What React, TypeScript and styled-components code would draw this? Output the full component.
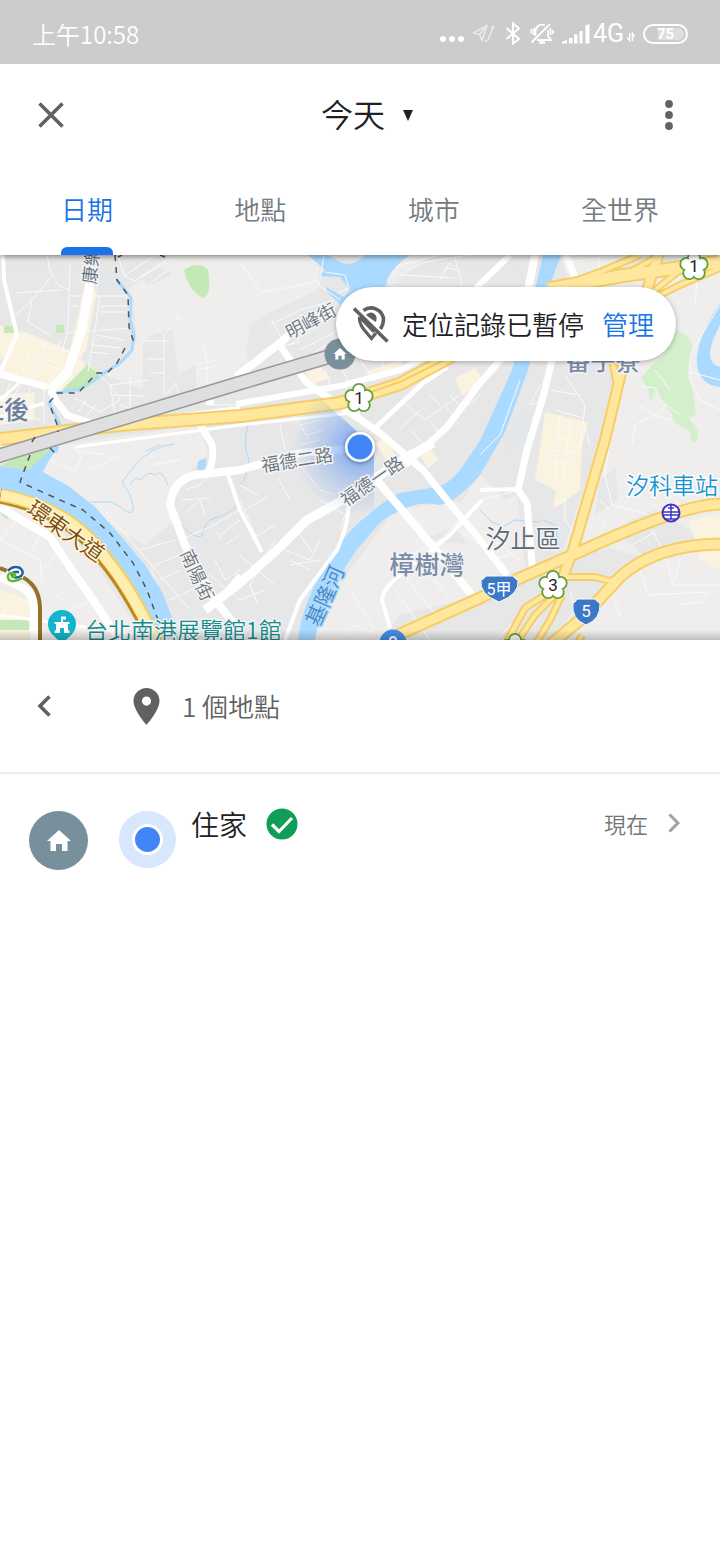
import React from 'react';
import styled, { createGlobalStyle } from 'styled-components';

const GlobalStyle = createGlobalStyle`
  *, *::before, *::after { box-sizing: border-box; }
  body {
    margin: 0;
    background: #fff;
    font-family: 'Noto Sans CJK TC', 'Noto Sans', sans-serif;
    font-weight: 350;
  }
  button {
    font: inherit;
    color: inherit;
    background: none;
    border: 0;
    padding: 0;
    cursor: pointer;
  }
`;

const Page = styled.div`
  min-height: 100vh;
  background: #fff;
`;

const StatusBar = styled.div`
  position: relative;
  z-index: 3;
  display: flex;
  align-items: center;
  justify-content: space-between;
  height: 64px;
  padding: 4px 32px 0;
  background: #ccc;
  color: #fff;
  font-size: 24px;
  line-height: 32px;
`;

const StatusIcons = styled.div`
  display: flex;
  align-items: center;
  gap: 8px;
  svg { display: block; }
`;

const Network = styled.span`
  display: flex;
  align-items: center;
  gap: 3px;
  font-family: Roboto, sans-serif;
  font-size: 25px;
  font-weight: 400;
`;

const Battery = styled.span`
  display: flex;
  align-items: center;
  justify-content: center;
  width: 45px;
  height: 20px;
  border: 2px solid #fff;
  border-radius: 10px;
  background: linear-gradient(90deg, transparent 11px, #dedede 11px) content-box;
  padding: 2px;
  font: 700 15px/16px Roboto, sans-serif;
`;

const Header = styled.header`
  position: relative;
  z-index: 2;
  background: #fff;
  box-shadow: 0 1px 6px rgba(0, 0, 0, 0.55);
`;

const AppBar = styled.div`
  display: flex;
  align-items: center;
  height: 102px;
`;

const BarButton = styled.button`
  display: grid;
  place-items: center;
  width: 102px;
  height: 96px;
`;

const TitleButton = styled.button`
  display: flex;
  align-items: center;
  justify-content: center;
  gap: 18px;
  flex: 1;
  padding: 0 0 4px 14px;
  color: #202124;
  font-size: 32px;
  line-height: 48px;
  svg { margin-top: 4px; }
`;

const Tabs = styled.nav`
  display: flex;
  justify-content: space-between;
  height: 89px;
  padding: 0 61px;
`;

const Tab = styled.button<{ $active?: boolean }>`
  display: flex;
  flex-direction: column;
  justify-content: space-between;
  padding-top: 23px;
  font-size: 26px;
  line-height: 40px;
  color: ${p => (p.$active ? '#1a73e8' : '#757a80')};
  &::after {
    content: '';
    width: 100%;
    height: 8px;
    border-radius: 6px 6px 0 0;
    background: ${p => (p.$active ? '#1a73e8' : 'transparent')};
  }
`;

const MapArea = styled.section`
  position: relative;
  height: 385px;
  overflow: hidden;
  &::after {
    content: '';
    position: absolute;
    inset: auto 0 0;
    height: 10px;
    background: linear-gradient(transparent, rgba(0, 0, 0, 0.2));
  }
`;

const MapSvg = styled.svg`
  display: block;
  width: 100%;
  height: 100%;
`;

const Notice = styled.div`
  position: absolute;
  z-index: 1;
  top: 32px;
  right: 44px;
  display: flex;
  align-items: center;
  height: 74px;
  padding: 0 22px 0 16px;
  border-radius: 37px;
  background: #fff;
  box-shadow: 0 1px 5px rgba(0, 0, 0, 0.3);
  color: #202124;
  font-size: 26px;
  line-height: 40px;
  svg { margin-right: 12px; }
`;

const Manage = styled.button`
  margin-left: 18px;
  color: #1a73e8;
`;

const Summary = styled.div`
  display: flex;
  align-items: center;
  height: 134px;
  border-bottom: 2px solid #eee;
  color: #616161;
  font-size: 26px;
  line-height: 40px;
`;

const BackButton = styled.button`
  display: grid;
  place-items: center;
  width: 88px;
  height: 88px;
`;

const PinIcon = styled.svg`
  margin: 0 22px 0 45px;
`;

const PlaceRow = styled.button`
  display: flex;
  align-items: flex-start;
  width: 100%;
  padding: 28px 40px 24px 29px;
  text-align: left;
`;

const HomeBadge = styled.span`
  display: grid;
  place-items: center;
  width: 59px;
  height: 59px;
  margin: 9px 31px 0 0;
  border-radius: 50%;
  background: #78909c;
`;

const NowDot = styled.span`
  display: grid;
  place-items: center;
  width: 57px;
  height: 57px;
  margin: 9px 15px 0 0;
  border-radius: 50%;
  background: #d8e7fd;
  &::before {
    content: '';
    width: 31px;
    height: 31px;
    border: 3px solid #fff;
    border-radius: 50%;
    background: #4285f4;
  }
`;

const PlaceName = styled.span`
  display: flex;
  align-items: center;
  gap: 19px;
  flex: 1;
  color: #202124;
  font-size: 28px;
  line-height: 44px;
`;

const PlaceTime = styled.span`
  display: flex;
  align-items: center;
  gap: 20px;
  color: #757575;
  font-size: 22px;
  line-height: 42px;
`;

const HOUSE = 'M0 -11 L-12 0 H-8.500 V10 H-3 V3 H3 V10 H8.500 V0 H12 Z';

const ruralAreas = [
  'M172 255H320L318 290 275 310 250 325 246 350 250 372 238 385 196 388 196 365 178 375 172 330 150 335 143 345 143 390 105 375 130 357 137 340 133 300 128 290Z',
  'M20 470 60 445 200 425 208 455 180 480 168 500 180 515 145 545 60 500Z',
  'M0 500 40 515 90 555 145 640 0 640Z',
  'M320 610 395 510 470 500 475 520 420 540 480 545 500 590 400 615 380 640 305 640Z',
  'M150 560 175 640 155 640Z',
  'M545 300 720 255V640H555L600 600 650 560 610 548 560 560 600 440 625 365 560 345Z',
  'M390 270 408 255 430 255 392 285Z',
  'M560 255H640L570 285Z',
  'M480 475 505 500 517 495 525 570 490 575 450 520Z',
];

const builtUpAreas = [
  'M600 480 616 468 618 500 595 515ZM630 520 655 510 690 530 700 545 650 560 625 540Z',
  'M120 265 150 258 172 275 150 285Z',
];

const blocks = [
  'M15 345 20 330 45 340 80 355 88 372 60 395 0 370Z',
  'M0 325 20 335 10 355 0 360Z',
  'M85 285 97 290 86 350 66 378 72 340Z',
  'M0 395 35 392 34 420 0 425Z',
  'M305 370 320 366 330 378 310 385Z',
  'M365 372 400 360 405 368 375 380Z',
  'M545 412 588 422 582 445 580 490 560 505 553 508 556 490 535 480 540 450Z',
  'M455 378 475 368 485 382 462 396Z',
  'M690 520 720 515V570L700 560Z',
  'M0 590 30 600 30 640 0 640Z',
  'M376 444 384 438 398 458 388 462Z',
  'M420 455 430 448 438 460 428 468Z',
];

const parks = [
  'M184 270Q198 260 208 270Q212 295 203 298Q188 290 184 270Z',
  'M62 390 88 364 104 376 80 392Z',
  'M56 325H64V333H56Z',
  'M4 326H15V333H4Z',
  'M0 466 30 450 55 446 50 458 28 470Z',
  'M0 507 9 519 6 519 0 512Z',
  'M0 620H29V630H0Z',
];

const rightPark =
  'M676 330Q692 335 692 350L690 360Q684 374 693 390L696 415 688 418Q702 432 697 440 690 446 690 432L674 422 672 414 662 400 655 392 650 402 648 388 641 378 655 362 664 355Z';

const minorRoads = [
  // west side
  'M47 255 50 270 58 285 70 290M50 278 32 300 28 322 50 335M16 293 62 290M14 316 32 300M70 262 68 330 60 360',
  'M20 335 45 345 70 352M30 350 20 380M45 345 30 382M66 333 130 328M70 296H128M72 306 78 306M100 296 96 322 88 372M100 306H128M100 312H128M96 335 125 340M92 345 120 348M90 352 110 354',
  'M30 360 68 372M28 367 62 380M0 350 25 335M36 345 56 350 62 340M42 358 60 364M0 400 44 406M0 410 40 420M10 382 4 400M20 386 10 402M30 388 26 405M44 390V425',
  'M88 364 110 385 116 420M75 398 100 412 120 400 110 385 150 380M130 376V415M80 425 95 405M86 400 78 412M112 395 145 396M120 405 150 415M155 325 164 335 164 395M143 341H170M146 359H164M150 373H164M164 335 180 318 174 315',
  'M118 255 124 276 155 255M124 276 135 281 168 258M140 278 166 262M150 283 168 270M204 345 208 372M198 364 216 360M197 370 216 366M206 372 210 392M166 395 175 383 182 400M215 390 210 405 235 405',
  // north centre
  'M240 262 262 292 302 285 318 280M324 255 319 285 340 300M325 272 345 275 349 288 338 293',
  'M395 290 388 280 400 265 440 255M400 275 455 278M410 270 425 262 470 255M440 280 450 262M445 268 460 270M455 258 462 285',
  'M270 325 300 310 335 300M272 320 285 345M290 345 325 320M300 350 335 332M310 356 325 345M300 370 370 352M340 365 350 385M360 360 375 382M325 370 332 390M380 358 388 375M265 350 300 342',
  'M400 400 425 420 480 380M430 395 440 405M440 430 480 395M445 405 460 425M420 410 400 430M450 395 465 412M410 430 430 450M430 420 440 435',
  'M290 410 310 440M300 425 320 420M280 425 285 450M305 435 325 430M300 445 320 440',
  // centre south
  'M278 478 290 500M300 465 320 490 335 495M240 485 258 495M245 510 270 495M240 500 262 550M250 540 275 525M275 540 250 585 258 605M285 550 310 560 320 540M300 535 312 552M290 565 320 560M240 555 275 585M320 500 345 515 340 530M240 600 265 590M310 570 290 560',
  'M185 490 200 485 208 475M182 500 210 498M186 512 200 500 205 515M180 540 215 525M213 525 240 510M220 535 240 520M225 545 240 535M215 530 222 540M140 550 175 540M155 565 195 548M160 580 180 570M170 600 195 588 210 575 240 600M215 560 225 580 240 570',
  'M100 505 130 540 190 610M50 460 75 472 82 455 70 445M75 450 105 455M150 465 180 460M90 470 120 455',
  'M0 540 40 560 42 580M25 510 0 540M42 530 30 555M55 555 35 580M40 580 62 600M70 610 95 598M10 600 0 620',
  'M382 580 400 560 440 540 480 500 520 490M400 570 440 620M425 570 450 600M395 590 430 640M350 590 375 630M340 640 355 625 380 635M420 560 445 590M430 515 415 530 425 545M480 545 460 530',
  'M480 455 500 435 520 380M540 385 530 405 545 400M550 390 580 395M565 375 585 405 580 450M555 410 583 418M550 425 580 430M552 437 575 440M548 450 582 452M545 462 575 464M545 475 570 475M560 415 554 490M570 420 562 490M583 420 590 445',
  'M640 406 655 415 670 420M660 412 665 405M655 415 635 425 632 445M645 442 650 440M555 502 565 500M565 500 565 520 575 535M610 440 605 475 612 505 640 512 655 518M600 500 610 510M652 530 665 555 675 550M665 555 673 585H720M632 545 655 532M605 520 597 540M600 580 610 590 620 615 628 620M640 570 648 595 708 592 702 602 680 604M680 558 675 580',
  'M720 305 690 355Q688 380 700 400L720 410M697 280 695 305M641 386 655 388 660 400 680 415M670 390 655 370M480 530 520 560M510 555 490 560M570 590 575 610 555 640M540 598 495 640',
  'M570 262 600 258 598 272 580 280M690 372 720 380',
];

const roads: [string, number][] = [
  ['M90 255V283L82 330 67 373 50 390', 9],
  ['M50 390 57 402 67 415 93 424', 7],
  ['M0 374 47 387', 7],
  ['M3 255 4 280 17 335 0 372', 4],
  ['M372 447 300 453 240 470 195 475Q173 480 170 505L185 545 215 600 235 625', 8],
  ['M198 420 212 445Q215 458 208 473', 7],
  ['M205 610 240 583 277 550 307 520 343 500 407 457 433 443', 9],
  ['M215 605 240 575', 5],
  ['M228 475 240 510 262 552', 4],
  ['M348 503Q350 520 337 550L300 600 285 640', 4],
  ['M278 343 307 383 380 433 423 470 447 500 480 540 507 575', 7],
  ['M375 478 430 543 472 595', 8],
  ['M236 377 280 343 300 325', 8],
  ['M236 404 340 386 400 370 450 345', 6],
  ['M373 430 423 383 447 367', 5],
  ['M405 465 447 427 480 383 502 358', 7],
  ['M476 288 510 255', 6],
  ['M535 255 528 290', 8],
  ['M552 360 543 397 527 450 518 490 527 503 533 575', 7],
  ['M480 490 518 489', 4],
  ['M566 255 577 282', 7],
  ['M0 507 50 537 67 563 93 600 120 640', 8],
  ['M0 577 23 588Q34 594 34 612V640', 8],
  ['M390 628 382 600Q382 590 400 575L450 535 482 500', 4],
  ['M0 615 140 635', 3],
  ['M210 400V405', 8],
  ['M0 445 93 426 240 408', 4],
  ['M75 447 240 425 360 412', 3],
  ['M0 417 44 403M0 400 20 382', 3],
];

const highways: [string, number][] = [
  ['M0 439 120 425 240 416 340 403 400 384 450 357 548 295', 10],
  ['M548 289 620 276 720 262', 11],
  ['M640 255 600 272 555 288M660 255 625 275', 4],
  ['M690 262 655 290M720 268 680 285 650 300', 4],
  ['M660 250 647 290 623 365 605 440 573 550 563 577', 8],
  ['M611 355 617 385', 4],
  ['M385 644 400 634 480 598 520 578 577 553 Q680 505 720 504', 9],
  ['M550 645 580 620 620 577Q655 545 720 544', 9],
  ['M565 577 595 577 610 581 625 574', 4],
  ['M553 590 525 608 505 645M560 590 535 615 515 645M562 595 550 620 535 645', 4],
  ['M577 645 582 635', 4],
];

const dashedLine = [
  'M115 255 117 280 128 295 129 327 134 343M125 348 117 363 107 373 97 373 78 393 57 393 49 403 58 427V432M35 437 30 445',
  'M30 455 20 482 60 500 83 510 110 533 133 563 147 590 158 620M50 448 57 455M118 257 122 255M160 255 165 257',
];

const PETALS = [[0, -8], [7.600, -2], [4.700, 7], [-4.700, 7], [-7.600, -2]];

const FlowerMarker = ({ x, y, label }: { x: number; y: number; label: string }) => (
  <g transform={`translate(${x} ${y})`}>
    <g fill="#689f38">{PETALS.map(([cx, cy]) => <circle key={`${cx}`} cx={cx} cy={cy} r="7" />)}</g>
    <g fill="#fff">
      {PETALS.map(([cx, cy]) => <circle key={`${cx}`} cx={cx} cy={cy} r="5.200" />)}
      <circle r="8" />
    </g>
    <text y="6" fontFamily="Roboto" fontSize="17" fontWeight="400" fill="#222" textAnchor="middle">{label}</text>
  </g>
);

const Label = ({ x, y, size, fill, rotate = 0, weight = 350, anchor = 'middle', halo = '#f4f4f4', children }: {
  x: number; y: number; size: number; fill: string; rotate?: number; weight?: number;
  anchor?: 'start' | 'middle' | 'end'; halo?: string; children: string;
}) => (
  <text
    transform={`translate(${x} ${y}) rotate(${rotate})`}
    dy="0.36em"
    fontSize={size}
    fontWeight={weight}
    fill={fill}
    textAnchor={anchor}
    stroke={halo}
    strokeWidth="3"
    strokeLinejoin="round"
    paintOrder="stroke"
  >
    {children}
  </text>
);

const TimelineMap = () => (
  <MapSvg viewBox="0 255 720 385" preserveAspectRatio="xMidYMid slice" role="img" aria-label="地圖">
    <defs>
      <radialGradient id="beam" gradientUnits="userSpaceOnUse" cx="360" cy="447" r="68">
        <stop offset="0" stopColor="#4285f4" stopOpacity="0.7" />
        <stop offset="0.5" stopColor="#4285f4" stopOpacity="0.3" />
        <stop offset="1" stopColor="#4285f4" stopOpacity="0" />
      </radialGradient>
      <filter id="markerShadow" x="-50%" y="-50%" width="200%" height="200%">
        <feDropShadow dx="0" dy="1" stdDeviation="2" floodOpacity="0.4" />
      </filter>
    </defs>
    <rect y="255" width="720" height="385" fill="#e7e7e7" />
    <g fill="#efeeed">{ruralAreas.map(d => <path key={d} d={d} />)}</g>
    <g fill="#e7e7e7">{builtUpAreas.map(d => <path key={d} d={d} />)}</g>
    <path d="M101 270 125 278 128 293 98 296ZM238 372 275 345 286 362 262 370ZM515 420 535 408 530 440 505 450Z" fill="#e3e7ea" />
    <g fill="#faf3e0">{blocks.map(d => <path key={d} d={d} />)}</g>
    <g fill="#c5e8b7">{parks.map(d => <path key={d} d={d} />)}</g>
    <path d={rightPark} fill="#d4efcb" />

    <g fill="#aadaff">
      <path d="M0 466 28 470 45 455 56 444 60 444 48 462 43 472 70 487 95 507 120 535 145 565 162 592 174 622 180 640H150L135 610 110 565 80 532 50 512 25 498 0 489Z" />
      <path d="M298 640Q302 600 333 553Q350 528 368 515 385 500 400 493L430 488Q445 488 460 470L480 441 512 370 535 290 543 255H561L548 290 528 370 505 432 480 475Q455 503 440 505 418 500 400 511 385 517 378 525L355 552Q320 605 315 640Z" />
      <path d="M308 255 325 270 319 276 340 277 350 290 344 297 326 287 326 291 342 306 380 303 386 285Q388 270 410 255H366Q352 268 340 262L328 255Z" />
      <path d="M720 303Q695 340 697 365 700 385 720 387V367Q710 365 710 352 711 342 720 325Z" />
      <path d="M198 461 206 458 206 466 202 472 197 469Z" />
    </g>
    <g fill="none" stroke="#aadaff" strokeLinecap="round" strokeLinejoin="round">
      <path d="M117 280 131 298 130 320 134 335 132 350 120 363 98 377 80 389 57 393 49 403 60 425" strokeWidth="3" />
      <path d="M59 432 55 450" strokeWidth="6" />
      <path d="M174 444Q150 446 133 468L122 482Q135 500 133 511 128 515 122 508L112 502 90 502M182 525Q195 540 202 536 205 520 215 518 230 515 240 502M248 425Q242 445 249 460 247 480 240 485M146 451 160 445M480 510 492 522 500 525M500 528 515 520 540 522M543 520 555 525 560 550" strokeWidth="1" />
      <path d="M130 485Q135 475 141 480 148 470 155 475 162 468 168 485" strokeWidth="1" />
    </g>

    <g fill="none" stroke="#fafafa" strokeWidth="1" strokeLinejoin="round">
      {minorRoads.map(d => <path key={d} d={d} />)}
    </g>
    <g fill="none" stroke="#fff" strokeLinejoin="round">
      {roads.map(([d, w]) => <path key={d} d={d} strokeWidth={w} />)}
    </g>

    <g fill="none" strokeLinejoin="round">
      <g stroke="#f6ce67">{highways.map(([d, w]) => <path key={d} d={d} strokeWidth={w + 4} />)}</g>
      <g stroke="#ffe89e">{highways.map(([d, w]) => <path key={d} d={d} strokeWidth={w} />)}</g>
      <path d="M450 357 400 382 345 401" stroke="#f6ce67" strokeWidth="2" />
      <path d="M0 496Q70 510 105 560 130 590 156 645" stroke="#b98a1e" strokeWidth="15" />
      <path d="M1 495Q72 508 107 559 132 589 158 645" stroke="#f6ce67" strokeWidth="13" />
      <path d="M1 495Q71 508 106 559 131 589 157 645" stroke="#ffefae" strokeWidth="10" />
      <path d="M0 568 20 576Q39 584 40 607V640" stroke="#947029" strokeWidth="4" />
      <path d="M-5 457 240 383 338 354" stroke="#999" strokeWidth="15" />
      <path d="M-5 457 240 383 338 354" stroke="#dfdfdf" strokeWidth="12" />
      <g stroke="#555" strokeWidth="1.500" strokeDasharray="6 6">{dashedLine.map(d => <path key={d} d={d} />)}</g>
    </g>

    <path d="M313 392 360 434 374 447V520H290V392Z" fill="url(#beam)" />

    <Label x={89} y={284} size={18} rotate={-83} anchor="start" fill="#5f6b76">康樂街</Label>
    <Label x={311} y={321} size={18} rotate={-28} fill="#6b757f">明峰街</Label>
    <Label x={29} y={410} size={25} weight={500} anchor="end" fill="#6d7f9b">社後</Label>
    <Label x={603} y={361} size={25} weight={500} fill="#7c8ca8">番子寮</Label>
    <Label x={297} y={460} size={18} rotate={-9} fill="#6b757f">福德二路</Label>
    <Label x={372} y={481} size={18} rotate={-35} fill="#6b757f">福德一路</Label>
    <Label x={325} y={596} size={21} rotate={-66} fill="#4a86c5" halo="#aadaff">基隆河</Label>
    <Label x={197} y={575} size={18} rotate={65} fill="#6b757f">南陽街</Label>
    <Label x={66} y={531} size={22} rotate={35} fill="#7b4a12" halo="#fff6d6">環東大道</Label>
    <Label x={427} y={565} size={25} weight={500} fill="#7a8ba8">樟樹灣</Label>
    <Label x={523} y={539} size={25} fill="#5c6875">汐止區</Label>
    <Label x={672} y={486} size={23} fill="#1a94cf" halo="#fff">汐科車站</Label>
    <Label x={85} y={631} size={23} anchor="start" fill="#178b8d">台北南港展覽館1館</Label>

    <FlowerMarker x={359} y={398} label="1" />
    <FlowerMarker x={694} y={266} label="1" />
    <FlowerMarker x={553} y={585} label="3" />
    <FlowerMarker x={515} y={648} label="3" />

    <g fill="#3b78c8" stroke="#fff" strokeWidth="1">
      <path d="M481 580Q484 579 486 576H513Q515 579 518 580 520 594 499 602 479 594 481 580Z" />
      <path d="M573 603Q576 602 577 599H595Q597 602 600 603 601 619 586 625 571 619 573 603Z" />
    </g>
    <g fill="#fff" fontFamily="Roboto, 'Noto Sans CJK TC', sans-serif" fontWeight="400" textAnchor="middle">
      <text x="499" y="595" fontSize="16">5甲</text>
      <text x="586" y="617" fontSize="17">5</text>
    </g>
    <circle cx="393" cy="643" r="13.500" fill="#448ee8" />
    <circle cx="393" cy="640" r="3" fill="none" stroke="#fff" strokeWidth="2" />

    <g transform="translate(671 513)" fill="none" stroke="#3f35c5" strokeWidth="2">
      <circle r="8.500" fill="#fff" />
      <path d="M-9 -1H9M-9 2H9M0 -8V6M-5 6H5M-3 -5H3" strokeWidth="1.500" />
    </g>
    <g transform="translate(15 574)" fill="none" strokeWidth="2.500">
      <circle r="9" fill="#fff" stroke="none" />
      <path d="M-7 -3Q-2 -9 5 -6 10 -2 6 2 1 5 -3 2 -4 -2 1 -2H4" stroke="#1f5f9f" />
      <path d="M7 4Q-1 9 -6 6 -9 0 -4 -1 1 -1 0 2L-4 3" stroke="#66b92e" />
    </g>
    <g transform="translate(62 625)">
      <path d="M0 20C-3 13 -14 10 -14 -1A14 14 0 0 1 14 -1C14 10 3 13 0 20Z" fill="#12b5cb" />
      <path d="M-7.500 8V5.500H-6V-1H-7.500V-3H-1V-8.500H4V-5.500H1V-3H7.500V-1H6V5.500H7.500V8H2V3H-2V8Z" fill="#fff" />
    </g>
    <circle cx="340" cy="354" r="15.500" fill="#78909c" />
    <path d={HOUSE} transform="translate(340 354) scale(0.55)" fill="#fff" />
    <g filter="url(#markerShadow)"><circle cx="360" cy="447" r="15" fill="#fff" /></g>
    <circle cx="360" cy="447" r="12.500" fill="#4285f4" />
  </MapSvg>
);

export default function App() {
  return (
    <Page>
      <GlobalStyle />
      <StatusBar>
        <span>上午10:58</span>
        <StatusIcons>
          <svg width="24" height="24" viewBox="0 0 24 24" fill="#fff">
            <circle cx="3" cy="17" r="3" /><circle cx="12" cy="17" r="3" /><circle cx="21" cy="17" r="3" />
          </svg>
          <svg width="24" height="24" viewBox="0 0 24 24" fill="none" stroke="#e8e8e8" strokeWidth="1.700" strokeLinejoin="round">
            <path d="M1.500 11 15 3.500 10 18.500 7.500 12.500ZM7.500 12.500 15 3.500M13 19.500 16 18 21.500 4.500 18.500 6" />
          </svg>
          <svg width="18" height="24" viewBox="0 0 18 24" fill="none" stroke="#fff" strokeWidth="2">
            <path d="M2.500 6 15 17 9 21.500V1.500L15 6.500 2.500 17" />
          </svg>
          <svg width="24" height="24" viewBox="0 0 24 24" fill="none" stroke="#fff" strokeWidth="1.800">
            <path d="M5.500 14V9A6.500 6.500 0 0 1 15 3.500M18 8V14L21 18H7M20 2 1.500 20.500M1.500 7V12M4 6V13M20.500 6V13M23 8V12" />
            <path d="M9 20.500H15" strokeWidth="2.500" />
          </svg>
          <Network>
            <svg width="28" height="24" viewBox="0 0 28 24" fill="#fff">
              <path d="M0 21.500V20L5 17.500V21.500ZM7 16H10.500V21.500H7ZM12 12.500H15.500V21.500H12ZM17.500 9H20.500V21.500H17.500ZM23.500 3.500 27.500 2V21.500H23.500Z" />
            </svg>
            4G
            <svg width="8" height="24" viewBox="0 0 8 24" fill="none" stroke="#fff" strokeWidth="1.500">
              <path d="M2.700 11V18.500L0 15.500M5.500 19V11.500L8 14.500" />
            </svg>
          </Network>
          <Battery>75</Battery>
        </StatusIcons>
      </StatusBar>

      <Header>
        <AppBar>
          <BarButton aria-label="關閉">
            <svg width="26" height="26" viewBox="0 0 26 26" stroke="#5f6368" strokeWidth="3.600">
              <path d="M1.500 1.500 24.500 24.500M24.500 1.500 1.500 24.500" />
            </svg>
          </BarButton>
          <TitleButton>
            今天
            <svg width="10" height="11" viewBox="0 0 10 11" fill="#202124"><path d="M0 0H10L5 11Z" /></svg>
          </TitleButton>
          <BarButton aria-label="更多選項">
            <svg width="8" height="30" viewBox="0 0 8 30" fill="#5f6368">
              <circle cx="4" cy="4" r="3.900" /><circle cx="4" cy="15" r="3.900" /><circle cx="4" cy="26" r="3.900" />
            </svg>
          </BarButton>
        </AppBar>
        <Tabs>
          <Tab $active>日期</Tab>
          <Tab>地點</Tab>
          <Tab>城市</Tab>
          <Tab>全世界</Tab>
        </Tabs>
      </Header>

      <MapArea>
        <TimelineMap />
        <Notice>
          <svg width="38" height="40" viewBox="0 0 38 40" fill="none" stroke="#5f6060" strokeWidth="3.600">
            <path d="M11.500 6.500A12.500 12.500 0 0 1 31.500 15.500Q31.500 20.500 28.500 25" />
            <path d="M7.500 13Q7 19 11.500 25L19.500 34.500 24 29" strokeWidth="3.200" />
            <path d="M2 4.500 35.500 37.500" />
            <path d="M7.500 13 22 28" strokeWidth="3" />
            <path d="M14 11A5.500 5.500 0 0 1 23.500 18Z" fill="#5f6060" stroke="none" />
          </svg>
          定位記錄已暫停
          <Manage>管理</Manage>
        </Notice>
      </MapArea>

      <main>
        <Summary>
          <BackButton aria-label="上一頁">
            <svg width="14" height="22" viewBox="0 0 14 22" fill="none" stroke="#616161" strokeWidth="3.600">
              <path d="M12.500 1.500 3 11 12.500 20.500" />
            </svg>
          </BackButton>
          <PinIcon width="27" height="37" viewBox="0 0 27 37">
            <path fillRule="evenodd" fill="#616161" d="M13.500 0A13 13 0 0 1 26.500 13C26.500 22.500 13.500 37 13.500 37S.5 22.500.5 13A13 13 0 0 1 13.500 0ZM13.500 8.500A4.600 4.600 0 1 0 13.500 17.700 4.600 4.600 0 1 0 13.500 8.500Z" />
          </PinIcon>
          1 個地點
        </Summary>
        <PlaceRow>
          <HomeBadge>
            <svg width="24" height="21" viewBox="-12 -11 24 21" fill="#fff"><path d={HOUSE} /></svg>
          </HomeBadge>
          <NowDot />
          <PlaceName>
            住家
            <svg width="32" height="32" viewBox="0 0 32 32">
              <circle cx="16" cy="16" r="15.500" fill="#0f9d58" />
              <path d="M6 16.500 13 23.500 26 10" fill="none" stroke="#fff" strokeWidth="3.200" />
            </svg>
          </PlaceName>
          <PlaceTime>
            現在
            <svg width="12" height="20" viewBox="0 0 12 20" fill="none" stroke="#a0a0a0" strokeWidth="3">
              <path d="M1.500 1.500 10 10 1.500 18.500" />
            </svg>
          </PlaceTime>
        </PlaceRow>
      </main>
    </Page>
  );
}
